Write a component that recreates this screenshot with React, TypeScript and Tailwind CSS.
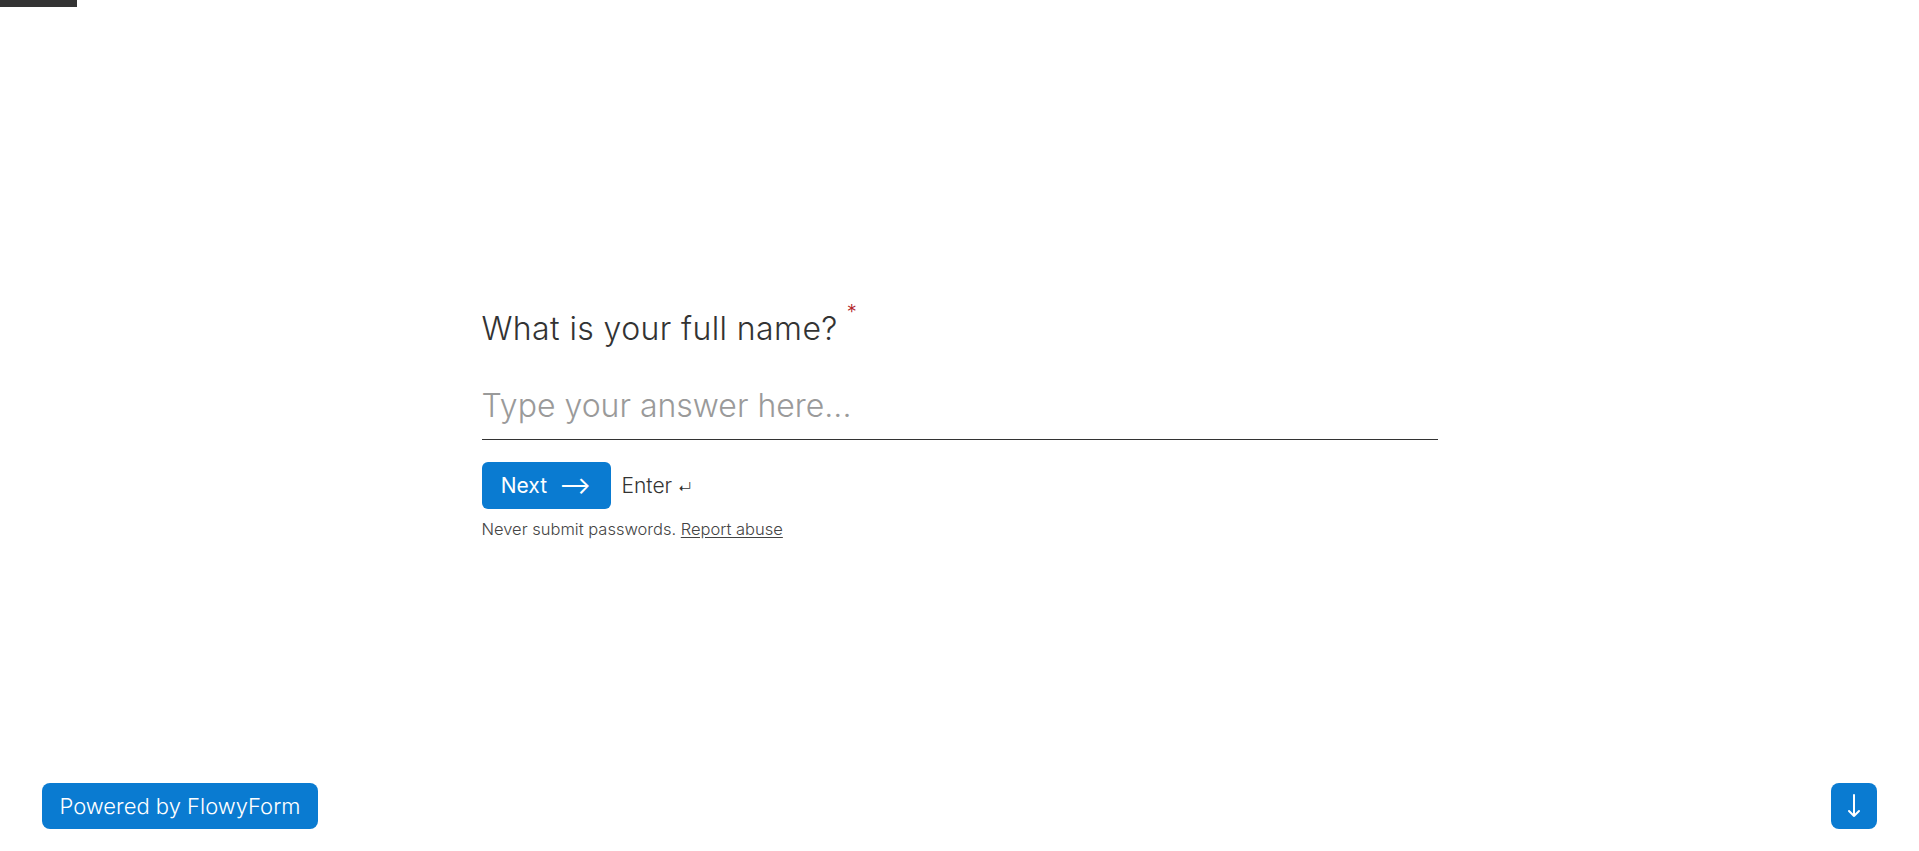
export default function App() {
  return (
    <div
      className="relative h-[851px] w-full overflow-hidden bg-white text-[#333]"
      style={{ fontFamily: "Inter, 'Noto Sans', sans-serif" }}
    >
      {/* progress */}
      <div className="absolute left-0 top-0 h-[7px] w-[77px] bg-[#333]" />

      <div className="flex h-full items-center justify-center">
        <div className="w-[956px]">
          <h1 className="flex items-start text-[32px] font-light leading-[40px] tracking-[0.4px] text-[#333]">
            What is your full name?
            <span className="ml-[9px] -mt-[17px] text-[20px] text-[#b3262a]">*</span>
          </h1>

          <div className="mt-[33px] border-b border-[#333] pb-[9px]">
            <input
              type="text"
              placeholder="Type your answer here..."
              className="w-full bg-transparent text-[32px] font-light leading-[48px] text-[#333] outline-none placeholder:text-[#9a9a9a]"
            />
          </div>

          <div className="mt-[22px] flex items-center gap-[11px]">
            <button className="flex h-[47px] w-[129px] items-center justify-center gap-[12px] rounded-[6px] bg-[#0a7bd1] text-[21px] font-normal text-white">
              <span>Next</span>
              <span className="text-[24px] leading-none">⟶</span>
            </button>
            <span className="text-[21px] font-light text-[#333]">
              Enter <span className="text-[14px]">↵</span>
            </span>
          </div>

          <p className="mt-[8px] text-[16.5px] font-light text-[#444]">
            Never submit passwords.{" "}
            <a href="#" className="underline underline-offset-2">
              Report abuse
            </a>
          </p>
        </div>
      </div>

      <button className="absolute bottom-[22px] left-[42px] flex h-[46px] w-[276px] items-center justify-center rounded-[8px] bg-[#0a7bd1] text-[22px] font-light text-white">
        Powered by FlowyForm
      </button>

      <button className="absolute bottom-[22px] right-[42px] flex h-[46px] w-[46px] items-center justify-center rounded-[8px] bg-[#0a7bd1] text-white">
        <svg width="14" height="26" viewBox="0 0 14 26" fill="none" stroke="currentColor" strokeWidth="2" strokeLinecap="round" strokeLinejoin="round">
          <path d="M7 2v21M2 18l5 5 5-5" />
        </svg>
      </button>
    </div>
  );
}
